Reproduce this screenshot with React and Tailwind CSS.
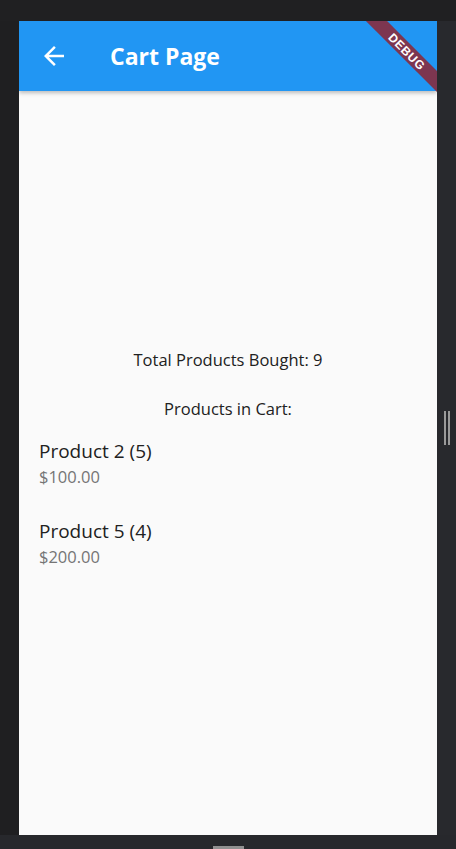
const cartItems = [
  { name: "Product 2", qty: 5, price: 100 },
  { name: "Product 5", qty: 4, price: 200 }
];

const font = { fontFamily: '"Open Sans", "Noto Sans", sans-serif' };

function BackArrow() {
  return (
    <svg width="30" height="30" viewBox="0 0 24 24" fill="white">
      <path d="M20 11H7.83l5.59-5.59L12 4l-8 8 8 8 1.41-1.41L7.83 13H20v-2z" />
    </svg>
  );
}

export default function App() {
  const total = cartItems.reduce((sum, i) => sum + i.qty, 0);

  return (
    <div className="w-[456px] h-[849px] bg-[#27282c] flex flex-col overflow-hidden" style={font}>
      {/* top emulator strip */}
      <div className="h-[21px] bg-[#202022] shrink-0" />

      <div className="flex flex-1">
        <div className="w-[19px] bg-[#1f1f21]" />

        {/* phone screen */}
        <div className="w-[418px] h-[814px] bg-[#fafafa] flex flex-col relative overflow-hidden">
          {/* App bar */}
          <div className="h-[70px] bg-[#2196f3] flex items-center shadow-[0_2px_4px_rgba(0,0,0,0.25)] z-10 shrink-0">
            <div className="w-[91px] pl-[20px] flex items-center">
              <BackArrow />
            </div>
            <h1 className="text-white text-[23px] font-bold">Cart Page</h1>
          </div>

          {/* Body */}
          <div className="flex flex-col pt-[257px]">
            <p className="text-center text-[16.5px] leading-[24px] text-[#212121]">
              Total Products Bought: {total}
            </p>
            <p className="text-center text-[16.5px] leading-[24px] text-[#212121] mt-[25px]">
              Products in Cart:
            </p>
            <div className="mt-[7px]">
              {cartItems.map((item) => (
                <div key={item.name} className="px-[20px] pt-[10px] pb-[18px]">
                  <div className="text-[19px] leading-[26px] text-[#212121]">
                    {item.name} ({item.qty})
                  </div>
                  <div className="text-[16.5px] leading-[26px] text-[#757575]">
                    ${item.price.toFixed(2)}
                  </div>
                </div>
              ))}
            </div>
          </div>

          {/* Debug banner */}
          <div className="absolute top-[23px] left-[328px] w-[120px] h-[15px] bg-[#7d3650] rotate-45 flex items-center justify-center z-20">
            <span
              className="text-white text-[12px] font-bold tracking-[0.6px] leading-none"
              style={{ fontFamily: '"Liberation Sans", sans-serif', fontWeight: 900 }}
            >
              DEBUG
            </span>
          </div>
        </div>

        {/* right strip with handle */}
        <div className="w-[19px] bg-[#28292d] flex items-start justify-center pt-[390px] gap-[2px]">
          <div className="w-[2px] h-[34px] bg-[#9a9a9a]" />
          <div className="w-[2px] h-[34px] bg-[#9a9a9a]" />
        </div>
      </div>

      {/* bottom strip */}
      <div className="h-[14px] bg-[#27282c] flex justify-center items-end shrink-0">
        <div className="w-[31px] h-[3px] bg-[#909090]" />
      </div>
    </div>
  );
}
